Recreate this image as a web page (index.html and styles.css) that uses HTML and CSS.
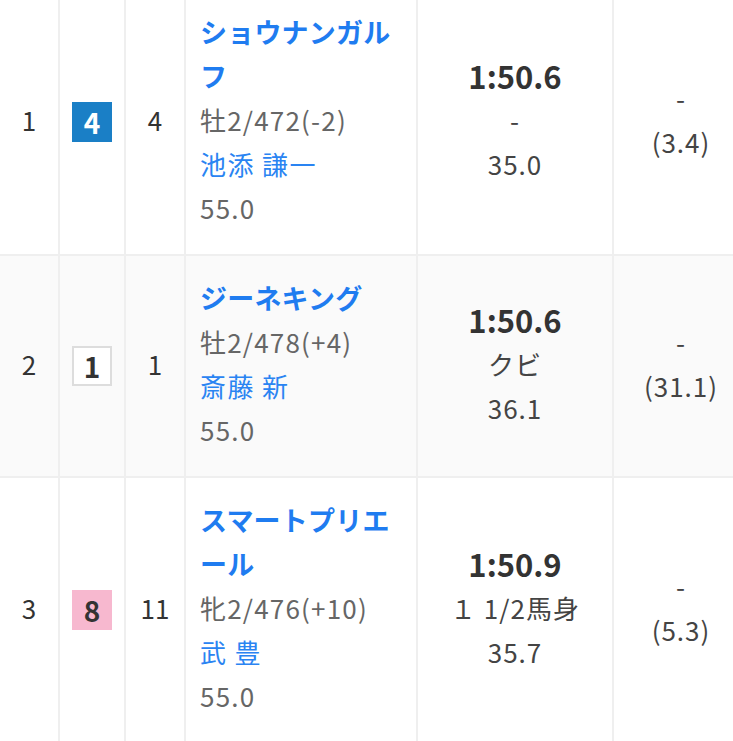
FILE: index.html
```html
<!DOCTYPE html>
<html lang="ja">
<head>
<meta charset="utf-8">
<link rel="stylesheet" href="styles.css">
</head>
<body>
<div class="viewport">
  <div class="table">
    <div class="row">
      <div class="cell c-rank">1</div>
      <div class="cell c-frame"><span class="waku waku4">4</span></div>
      <div class="cell c-num">4</div>
      <div class="cell c-horse">
        <span class="name">ショウナンガルフ</span>
        <span class="info">牡2/472(-2)</span>
        <span class="jockey">池添 謙一</span>
        <span class="info">55.0</span>
      </div>
      <div class="cell c-time">
        <span class="time">1:50.6</span>
        <span class="sub">-</span>
        <span class="sub">35.0</span>
      </div>
      <div class="cell c-odds">
        <span class="sub">-</span>
        <span class="sub">(3.4)</span>
      </div>
    </div>
    <div class="row alt">
      <div class="cell c-rank">2</div>
      <div class="cell c-frame"><span class="waku waku1">1</span></div>
      <div class="cell c-num">1</div>
      <div class="cell c-horse">
        <span class="name">ジーネキング</span>
        <span class="info">牡2/478(+4)</span>
        <span class="jockey">斎藤 新</span>
        <span class="info">55.0</span>
      </div>
      <div class="cell c-time">
        <span class="time">1:50.6</span>
        <span class="sub">クビ</span>
        <span class="sub">36.1</span>
      </div>
      <div class="cell c-odds">
        <span class="sub">-</span>
        <span class="sub">(31.1)</span>
      </div>
    </div>
    <div class="row">
      <div class="cell c-rank">3</div>
      <div class="cell c-frame"><span class="waku waku8">8</span></div>
      <div class="cell c-num">11</div>
      <div class="cell c-horse">
        <span class="name">スマートプリエール</span>
        <span class="info">牝2/476(+10)</span>
        <span class="jockey">武 豊</span>
        <span class="info">55.0</span>
      </div>
      <div class="cell c-time">
        <span class="time">1:50.9</span>
        <span class="sub">１ 1/2馬身</span>
        <span class="sub">35.7</span>
      </div>
      <div class="cell c-odds">
        <span class="sub">-</span>
        <span class="sub">(5.3)</span>
      </div>
    </div>
  </div>
</div>
</body>
</html>
```
FILE: styles.css
```css
* { box-sizing: border-box; }
html, body {
  margin: 0;
  padding: 0;
  background: #ffffff;
}
body {
  font-family: "Noto Sans CJK JP", "Noto Sans", sans-serif;
  color: #333333;
  font-size: 26px;
  line-height: 44px;
}
.viewport {
  width: 733px;
  height: 741px;
  overflow: hidden;
}
.table {
  width: 750px;
  margin-top: -12px;
}
.row {
  display: grid;
  grid-template-columns: 60px 66px 60px 232px 196px 136px;
  border-bottom: 2px solid #efefef;
  background: #ffffff;
}
.row:first-child { padding-top: 2px; }
.row.alt { background: #fafafa; }
.cell {
  border-right: 2px solid #efefef;
  padding: 20px 0 24px;
  display: flex;
  flex-direction: column;
  justify-content: center;
  align-items: center;
  text-align: center;
}
.c-frame { padding: 22px 0; }
.c-horse {
  align-items: flex-start;
  text-align: left;
  padding-left: 14px;
  padding-right: 14px;
}
.name {
  color: #1f7cf0;
  font-weight: 700;
  font-size: 27px;
  letter-spacing: 0.2px;
}
.info {
  color: #666666;
  letter-spacing: 1.2px;
}
.jockey {
  color: #2a84f2;
  letter-spacing: 1.4px;
}
.time {
  font-weight: 700;
  font-size: 31px;
  color: #333333;
}
.sub {
  color: #444444;
  letter-spacing: 1px;
}
.waku {
  width: 40px;
  height: 40px;
  display: flex;
  align-items: center;
  justify-content: center;
  font-weight: 700;
  font-size: 28px;
  line-height: 1;
}
.waku4 { background: #1a7fc6; color: #ffffff; }
.waku1 { background: #ffffff; border: 2px solid #dddddd; color: #333333; }
.waku8 { background: #f7b8cf; color: #333333; }
```
